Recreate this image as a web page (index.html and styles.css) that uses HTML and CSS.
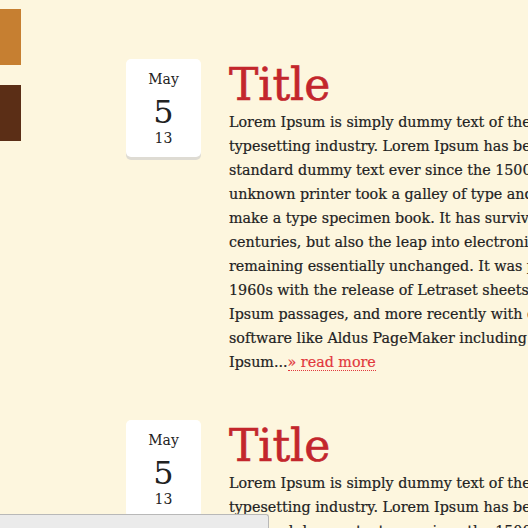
FILE: index.html
```html
<!DOCTYPE html>
<html>
<head>
<meta charset="utf-8">
<link rel="stylesheet" href="styles.css">
</head>
<body>
<div class="page">
  <aside class="side">
    <div class="swatch swatch-orange"></div>
    <div class="swatch swatch-brown"></div>
  </aside>
  <main class="posts">
    <article class="post">
      <div class="date">
        <div class="month">May</div>
        <div class="day">5</div>
        <div class="year">13</div>
      </div>
      <div class="entry">
        <h1 class="title">Title</h1>
        <p class="text">Lorem Ipsum is simply dummy text of the printing and<br>typesetting industry. Lorem Ipsum has been the industry's<br>standard dummy text ever since the 1500s, when an<br>unknown printer took a galley of type and scrambled it to<br>make a type specimen book. It has survived not only five<br>centuries, but also the leap into electronic typesetting,<br>remaining essentially unchanged. It was popularised in the<br>1960s with the release of Letraset sheets containing Lorem<br>Ipsum passages, and more recently with desktop publishing<br>software like Aldus PageMaker including versions of Lorem<br>Ipsum...<a class="more" href="#">» read more</a></p>
      </div>
    </article>
    <article class="post">
      <div class="date">
        <div class="month">May</div>
        <div class="day">5</div>
        <div class="year">13</div>
      </div>
      <div class="entry">
        <h1 class="title">Title</h1>
        <p class="text">Lorem Ipsum is simply dummy text of the printing and<br>typesetting industry. Lorem Ipsum has been the industry's<br>standard dummy text ever since the 1500s, when an<br>unknown printer took a galley of type and scrambled it to<br>make a type specimen book. It has survived not only five<br>centuries, but also the leap into electronic typesetting,<br>remaining essentially unchanged. It was popularised in the<br>1960s with the release of Letraset sheets containing Lorem<br>Ipsum passages, and more recently with desktop publishing<br>software like Aldus PageMaker including versions of Lorem<br>Ipsum...<a class="more" href="#">» read more</a></p>
      </div>
    </article>
  </main>
</div>
<div class="statusbar"></div>
</body>
</html>
```

FILE: styles.css
```css
html, body {
  margin: 0;
  padding: 0;
  background: #fdf6de;
  overflow: hidden;
}
body {
  font-family: "DejaVu Serif", "Liberation Serif", serif;
  color: #222222;
}
.page {
  display: flex;
  align-items: flex-start;
  width: 900px;
}
.side {
  width: 21px;
  display: flex;
  flex-direction: column;
  gap: 20px;
  padding-top: 9px;
}
.swatch {
  width: 21px;
  height: 56px;
}
.swatch-orange { background: #c67f31; }
.swatch-brown { background: #5b2e16; }
.posts {
  margin-left: 105px;
  padding-top: 59px;
}
.post {
  display: flex;
  align-items: flex-start;
  gap: 28px;
  margin-bottom: 46px;
}
.date {
  width: 75px;
  flex: none;
  background: #ffffff;
  border-radius: 5px;
  box-shadow: 0 3px 0 #dedbd3;
  text-align: center;
  padding: 10px 0;
  color: #222222;
}
.month {
  font-size: 14px;
  line-height: 20px;
}
.day {
  font-size: 32px;
  line-height: 34px;
  margin-top: 6px;
}
.year {
  font-size: 14px;
  line-height: 18px;
}
.entry {
  white-space: nowrap;
}
.title {
  margin: 0;
  font-size: 44px;
  line-height: 51px;
  font-weight: normal;
  color: #c3262c;
  -webkit-text-stroke: 0.6px #c3262c;
}
.text {
  margin: 0;
  font-size: 14.3px;
  line-height: 24px;
  -webkit-text-stroke: 0.2px #222222;
}
.more {
  color: #e2383d;
  text-decoration: none;
  border-bottom: 1px dotted #e2383d;
  -webkit-text-stroke: 0.2px #e2383d;
}
.statusbar {
  position: fixed;
  left: 0;
  bottom: 0;
  width: 268px;
  height: 13px;
  background: #ebebeb;
  border-top: 1px solid #b8b8b8;
  border-right: 1px solid #b8b8b8;
  border-top-right-radius: 3px;
}
```
